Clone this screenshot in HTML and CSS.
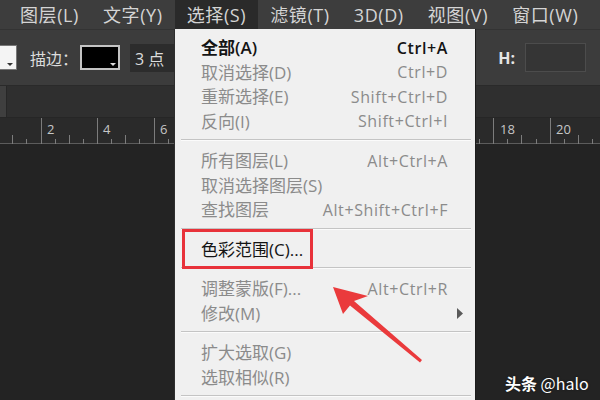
FILE: index.html
```html
<!DOCTYPE html>
<html lang="zh-CN">
<head>
<meta charset="utf-8">
<title>选择菜单</title>
<link rel="stylesheet" href="styles.css">
</head>
<body>
<div class="app">
  <nav class="menubar">
    <span class="mi">图层(L)</span>
    <span class="mi">文字(Y)</span>
    <span class="mi active">选择(S)</span>
    <span class="mi">滤镜(T)</span>
    <span class="mi">3D(D)</span>
    <span class="mi">视图(V)</span>
    <span class="mi">窗口(W)</span>
    <span class="mi">帮助(H)</span>
  </nav>
  <div class="options">
    <span class="swatch white"><i></i></span>
    <span class="label">描边：</span>
    <span class="swatch black"><i></i></span>
    <span class="num">3 点</span>
    <span class="spacer"></span>
    <span class="hlabel">H:</span>
    <span class="hbox"></span>
  </div>
  <div class="tabs"><span class="tabstub"></span></div>
  <div class="ruler">
    <svg class="ruler-svg" width="600" height="26" viewBox="0 0 600 26">
      <path class="tick" d="M41.5 0V26M97.5 0V26M154.5 0V26M210.5 0V26M267.5 0V26M324.5 0V26M380.5 0V26M437.5 0V26M493.5 0V26M550.5 0V26
        M12.5 17V26M69.5 17V26M125.5 17V26M182.5 17V26M238.5 17V26M295.5 17V26M352.5 17V26M408.5 17V26M465.5 17V26M521.5 17V26M578.5 17V26
        M26.5 21V26M55.5 21V26M83.5 21V26M111.5 21V26M139.5 21V26M168.5 21V26M196.5 21V26M224.5 21V26M252.5 21V26M281.5 21V26M309.5 21V26M338.5 21V26M366.5 21V26M394.5 21V26M423.5 21V26M451.5 21V26M479.5 21V26M507.5 21V26M536.5 21V26M564.5 21V26M592.5 21V26"/>
      <g class="rnum">
        <text x="47" y="16">2</text>
        <text x="103" y="16">4</text>
        <text x="160" y="16">6</text>
        <text x="500" y="16">18</text>
        <text x="556" y="16">20</text>
      </g>
    </svg>
  </div>
  <div class="canvas"></div>

  <div class="dropdown">
    <div class="row on strong"><span>全部(A)</span><span class="sc">Ctrl+A</span></div>
    <div class="row"><span>取消选择(D)</span><span class="sc">Ctrl+D</span></div>
    <div class="row"><span>重新选择(E)</span><span class="sc">Shift+Ctrl+D</span></div>
    <div class="row"><span>反向(I)</span><span class="sc">Shift+Ctrl+I</span></div>
    <div class="sep"></div>
    <div class="row"><span>所有图层(L)</span><span class="sc">Alt+Ctrl+A</span></div>
    <div class="row"><span>取消选择图层(S)</span></div>
    <div class="row"><span>查找图层</span><span class="sc">Alt+Shift+Ctrl+F</span></div>
    <div class="sep"></div>
    <div class="row on marked"><span>色彩范围(C)...</span><span class="redbox"></span></div>
    <div class="sep"></div>
    <div class="row"><span>调整蒙版(F)...</span><span class="sc">Alt+Ctrl+R</span></div>
    <div class="row sub"><span>修改(M)</span><svg class="subarrow" width="6" height="11" viewBox="0 0 6 11"><path d="M0 0L6 5.5L0 11Z"/></svg></div>
    <div class="sep"></div>
    <div class="row"><span>扩大选取(G)</span></div>
    <div class="row"><span>选取相似(R)</span></div>
    <div class="sep"></div>
  </div>

  <svg class="arrow" width="600" height="400" viewBox="0 0 600 400">
    <polygon points="333,287 368,296 354,301 422,360 420,362.5 350,305.5 343,314"/>
  </svg>

  <div class="watermark"><b>头条</b> @halo</div>
</div>
</body>
</html>
```

FILE: styles.css
```css
* { box-sizing: border-box; }
html, body { margin: 0; padding: 0; }
body {
  width: 600px;
  height: 400px;
  overflow: hidden;
  background: #232323;
  font-family: "Open Sans", "Noto Sans CJK SC", sans-serif;
}
.app {
  position: relative;
  width: 600px;
  height: 400px;
  display: flex;
  flex-direction: column;
  overflow: hidden;
}

/* menu bar */
.menubar {
  height: 29px;
  flex: none;
  display: flex;
  align-items: stretch;
  padding-left: 8px;
  background: #3d3d3d;
  white-space: nowrap;
  overflow: hidden;
}
.mi {
  display: flex;
  align-items: center;
  padding: 0 12px;
  font-size: 18px;
  line-height: 1;
  letter-spacing: 0.6px;
  color: #d4d4d4;
}
.mi.active { background: #2a2a2a; }

/* options bar */
.options {
  height: 56px;
  flex: none;
  display: flex;
  align-items: center;
  background: #3c3c3c;
  border-top: 1px solid #333;
  color: #dcdcdc;
  font-size: 16px;
}
.swatch {
  position: relative;
  flex: none;
  height: 25px;
}
.swatch i {
  position: absolute;
  right: 3px;
  bottom: 3px;
  width: 0;
  height: 0;
  border-left: 3px solid transparent;
  border-right: 3px solid transparent;
  border-top: 3px solid #333;
}
.swatch.white {
  width: 22px;
  margin-left: -5px;
  background: #f4f4f4;
  border: 1px solid #777;
}
.label { margin-left: 13px; }
.swatch.black {
  width: 40px;
  margin-left: 2px;
  background: #000;
  border: 2px solid #c4c4c4;
}
.swatch.black i { border-top-color: #ddd; right: 2px; bottom: 2px; }
.num {
  margin-left: 10px;
  width: 46px;
  height: 28px;
  display: flex;
  align-items: center;
  padding-left: 5px;
  background: #2c2c2c;
  font-size: 16px;
}
.spacer { flex: 1; }
.hlabel { font-weight: 700; font-size: 16px; color: #e6e6e6; }
.hbox {
  width: 61px;
  height: 29px;
  margin-left: 10px;
  margin-right: 14px;
  background: #353535;
  border: 1px solid #4c4c4c;
}

/* document tab bar */
.tabs {
  height: 32px;
  flex: none;
  display: flex;
  background: #2f2f2f;
  border-top: 1px solid #2a2a2a;
}
.tabstub {
  width: 7px;
  background: #3f3f3f;
  border-right: 1px solid #272727;
}

/* ruler */
.ruler {
  height: 27px;
  flex: none;
  background: #2a2a2a;
  border-top: 1px solid #262626;
  border-bottom: 1px solid #5c5c5c;
}
.ruler-svg { display: block; }
.tick { stroke: #7c7c7c; stroke-width: 1; fill: none; }
.rnum text {
  font-family: "Open Sans", sans-serif;
  font-size: 13px;
  fill: #c6c6c6;
}

.canvas { flex: 1; background: #232323; }

/* dropdown menu */
.dropdown {
  position: absolute;
  left: 174px;
  top: 29px;
  width: 302px;
  height: 380px;
  padding-top: 6.5px;
  background: #f0f0f0;
  border-left: 1px solid #2e2e2e;
  border-right: 1px solid #1c1c1c;
  font-size: 17px;
  color: #8b8b8b;
  white-space: nowrap;
}
.row {
  position: relative;
  height: 24.5px;
  line-height: 1;
  display: flex;
  align-items: center;
  justify-content: space-between;
  padding: 0 27px 0 26px;
}
.row.on { color: #141414; }
.row.strong { font-weight: 600; }
.sc { font-size: 16px; letter-spacing: 0.6px; }
.row.sub { padding-right: 12px; }
.subarrow path { fill: #5a5a5a; }
.sep {
  height: 2px;
  margin: 5.5px 4px 7.5px 6px;
  border-top: 1px solid #c4c4c4;
  border-bottom: 1px solid #fbfbfb;
}
.redbox {
  position: absolute;
  left: 7px;
  top: -8px;
  width: 131px;
  height: 40px;
  border: 3px solid #e8323a;
}

/* annotation arrow */
.arrow {
  position: absolute;
  left: 0;
  top: 0;
  pointer-events: none;
}
.arrow polygon { fill: #ea3a3c; }

.watermark {
  position: absolute;
  left: 505px;
  top: 371px;
  font-family: "Noto Sans CJK SC", sans-serif;
  font-size: 16px;
  line-height: 24px;
  color: #fff;
  text-shadow: 0 0 2px rgba(0,0,0,0.5);
}
.watermark b { font-weight: 700; }
```
